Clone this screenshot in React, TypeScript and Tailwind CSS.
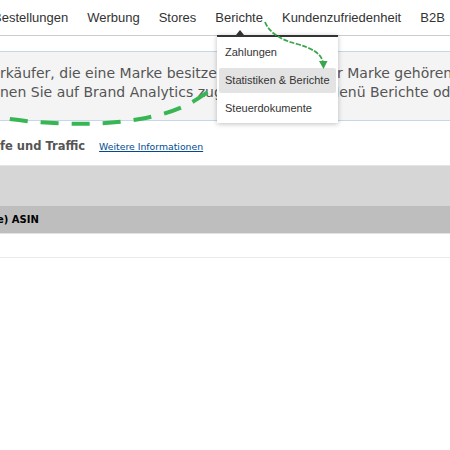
import React from 'react'

const navItems = ['Bestellungen', 'Werbung', 'Stores', 'Berichte', 'Kundenzufriedenheit', 'B2B']
const menuItems = ['Zahlungen', 'Statistiken & Berichte', 'Steuerdokumente']

export default function App() {
    return (
        <div className="relative w-[450px] h-[450px] overflow-hidden bg-white">

            {/* Top nav */}
            <nav className="h-[36px] border-b border-[#cccccc] flex items-center">
                <ul className="-ml-[7px] flex items-center gap-[19px] whitespace-nowrap font-['Liberation_Sans',Arial,sans-serif] text-[13px] leading-[15px] text-[#333333]">
                    {navItems.map(item => (
                        <li key={item}>{item}</li>
                    ))}
                </ul>
            </nav>

            {/* Info box */}
            <div className="mt-[15px] border-y border-[#c3d8e9] bg-[#f4f4f4] pt-[12px] pb-[18px] font-['DejaVu_Sans',Verdana,sans-serif] text-[14px] leading-[19px] text-[#555555] whitespace-nowrap">
                <div>rkäufer, die eine Marke besitzen und Agent einer Marke gehören,</div>
                <div>nen Sie auf Brand Analytics zugreifen über ihr Menü Berichte oder</div>
            </div>

            {/* Section heading */}
            <div className="mt-[18px] flex items-baseline gap-[14px] whitespace-nowrap font-['DejaVu_Sans',Verdana,sans-serif] leading-[14px]">
                <h2 className="text-[11.5px] font-bold text-[#555555]">fe und Traffic</h2>
                <a className="text-[9.3px] text-[#004b91] underline">Weitere Informationen</a>
            </div>

            {/* Table header */}
            <div className="mt-[11px] font-['DejaVu_Sans',Verdana,sans-serif]">
                <div className="h-[41px] border-t border-[#e4e4e4] bg-[#d6d6d6]" />
                <div className="h-[27px] bg-[#bebebe] flex items-center">
                    <span className="-ml-[3px] text-[10px] font-bold text-black whitespace-nowrap">e) ASIN</span>
                </div>
                <div className="h-[25px] border-y border-t-[#e2e2e2] border-b-[#ebebeb]" />
            </div>

            {/* Dropdown under "Berichte" */}
            <div className="absolute top-[30px] left-[236px] w-0 h-0 border-x-[4px] border-x-transparent border-b-[5px] border-b-[#333333]" />
            <div className="absolute top-[35px] left-[217px] w-[121px] h-[88px] bg-white border-t-2 border-[#333333] shadow-[0_1px_5px_rgba(0,0,0,0.25)] px-[2px] pt-[3px] flex flex-col gap-[3px] font-['Liberation_Sans',Arial,sans-serif] text-[11px] text-[#333333] whitespace-nowrap">
                {menuItems.map((item, i) => (
                    <div
                        key={item}
                        className={i === 1
                            ? 'h-[25px] flex items-center px-[6px] rounded-[2px] bg-[#e3e3e3]'
                            : 'h-[25px] flex items-center px-[6px]'}
                    >
                        {item}
                    </div>
                ))}
            </div>

            {/* Hand-drawn annotations */}
            <svg className="absolute inset-0 pointer-events-none" width="450" height="450" viewBox="0 0 450 450">
                <path
                    d="M -5 117 C 40 124, 95 127, 140 119 S 195 100, 214 88"
                    fill="none"
                    stroke="#37b653"
                    strokeWidth="4"
                    strokeDasharray="18 13"
                    strokeDashoffset="16"
                />
                <path
                    d="M 265 22 C 270 34, 282 40, 297 44 C 312 48, 322 54, 323 63"
                    fill="none"
                    stroke="#3aa64c"
                    strokeWidth="1.8"
                    strokeDasharray="5 1.5"
                />
                <polygon points="319,61 327.5,61 323.5,69" fill="#3aa64c" />
            </svg>
        </div>
    )
}
